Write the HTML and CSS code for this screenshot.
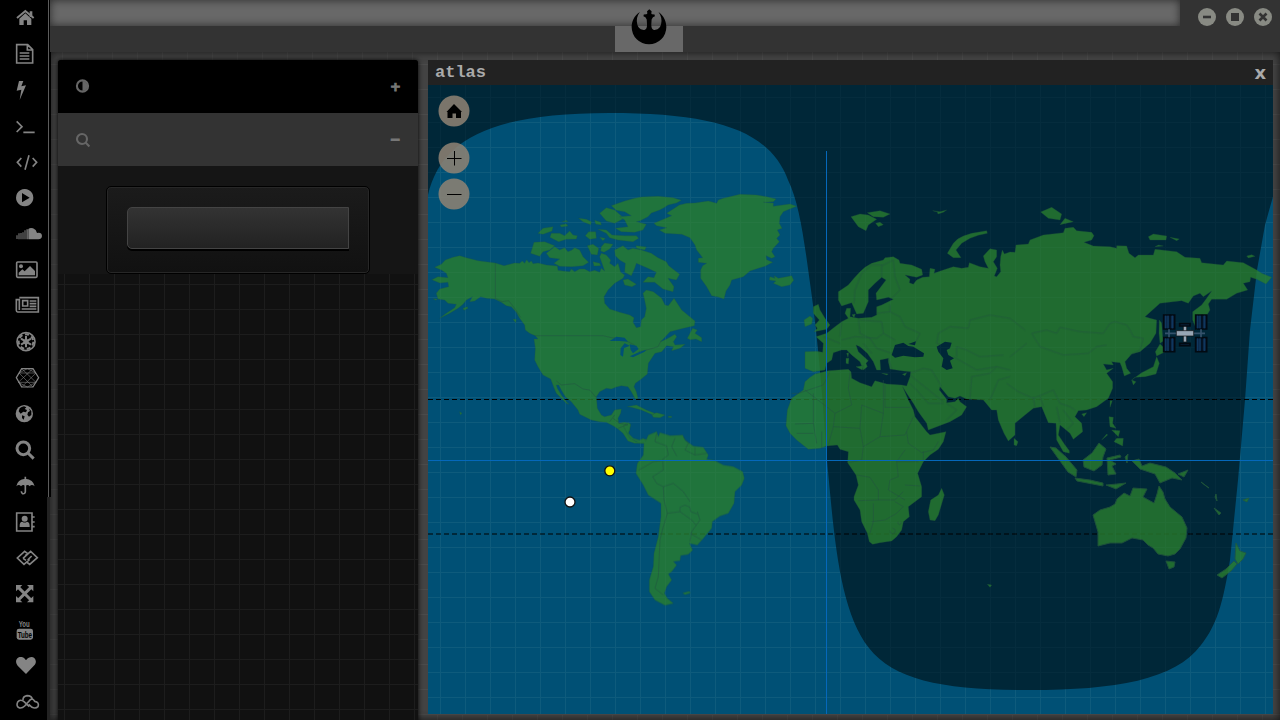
FILE: index.html
```html
<!DOCTYPE html>
<html lang="en">
<head>
<meta charset="utf-8">
<title>atlas</title>
<link rel="stylesheet" href="styles.css">
</head>
<body>
<div class="desktop">
<nav class="rail">
<svg viewBox="0 0 84 108"><path class="ln w5" d="M6 54L31 33 56 54"/><path d="M44 34h8v17h-8zM13 56L31 40 49 56V75H36V61H26V75H13z"/></svg>
<svg viewBox="0 0 84 108"><path class="ln w4" d="M5 26H38L53 41V81H5zM37 26V42H53M14 51H43M14 60H43M14 69H43"/></svg>
<svg viewBox="0 0 84 108"><path d="M12 27H25L19 43 33 40 14 84 19 53 5 56z"/></svg>
<svg viewBox="0 0 84 108"><path class="ln w4" d="M5 40L21 56 5 72M25 73H59"/></svg>
<svg viewBox="0 0 84 108"><path class="ln w4" d="M19 42L7 55 19 68M53 42L65 55 53 68M42 34L30 77"/></svg>
<svg viewBox="0 0 84 108"><path fill-rule="evenodd" d="M29 27a26 26 0 1 0 .1 0zM21 39L44 53 21 67z"/></svg>
<svg viewBox="0 0 84 108"><path d="M40 70V39Q46 34 54 37 64 41 66 51 80 48 81 60 80 70 70 70z"/><path opacity=".75" d="M4 58h4v11H4zM10 52h4v18h-4zM16 51h4v19h-4zM22 49h4v21h-4zM28 43h4v27h-4zM34 40h5v30h-5z"/></svg>
<svg viewBox="0 0 84 108"><rect class="ln w4" x="5" y="30" width="61" height="46" rx="3"/><circle cx="18" cy="43" r="6"/><path d="M11 70V62L22 52 29 58 45 42 60 57V70z"/></svg>
<svg viewBox="0 0 84 108"><path class="ln w4" d="M13 29H70V72H8Q4 72 4 67V35H13V66M23 38H38V54H23zM44 39H64M44 47H64M44 55H64M20 63H64"/></svg>
<svg viewBox="0 0 84 108"><circle class="ln w4" cx="33" cy="53" r="27"/><circle class="ln w5" stroke-dasharray="12 8" cx="33" cy="53" r="22"/><path class="ln w5" d="M33 36V70M18 44L48 62M18 62L48 44"/><circle cx="33" cy="53" r="8"/></svg>
<svg viewBox="0 0 84 108"><path class="ln w2" d="M10 67H64M12 39H63M20 26L63 67M54 26L10 67M12 39L54 81M63 39L20 81M37 26L12 39M37 26L63 39M37 81L63 67M37 81L10 67"/><path class="ln w3" d="M4 53L20 26H54L71 53 54 81H20z"/></svg>
<svg viewBox="0 0 84 108"><circle cx="28" cy="53" r="26"/><path class="cut" d="M27 31L34 34 29 39 36 42 33 49 25 47 17 53 11 46 14 37 20 33zM41 37L49 45 49 57 42 62 37 56 39 49 45 45zM21 58L29 61 26 71 21 66z"/></svg>
<svg viewBox="0 0 84 108"><circle class="ln w8" cx="25" cy="49" r="19"/><path class="ln w8" d="M39 63L56 80"/></svg>
<svg viewBox="0 0 84 108"><path d="M4 55Q7 34 31 32 55 34 59 55 50 47 44 55 39 48 31 54 24 48 18 55 12 47 4 55z"/><path class="ln w4" d="M31 26V71Q30 78 23 77 19 75 19 70"/></svg>
<svg viewBox="0 0 84 108"><path class="ln w4" d="M5 27H51V81H5zM52 39H59M52 54H59M52 68H59"/><circle cx="29" cy="44" r="9"/><path d="M14 69Q13 53 22 53 29 58 36 53 45 54 44 69z"/></svg>
<svg viewBox="0 0 84 108"><path class="ln w4" d="M38 41L29 34 7 54 27 73 44 58M24 55L47 34 67 53 44 73 35 66M24 55L33 61M50 48L38 60M38 41L31 47"/></svg>
<svg viewBox="0 0 84 108"><path class="ln w8" d="M10 34L48 72M48 34L10 72"/><path d="M3 27H22L3 46zM36 27H55V46zM3 60V79H22zM55 60V79H36z"/></svg>
<svg viewBox="0 0 84 108"><text class="you" x="11" y="46" textLength="33" lengthAdjust="spacingAndGlyphs">You</text><rect x="5" y="50" width="49" height="33" rx="7"/><text class="tube" x="8" y="77" textLength="43" lengthAdjust="spacingAndGlyphs">Tube</text></svg>
<svg viewBox="0 0 84 108"><path d="M33 78L8 53C-3 39 7 26 18 27 27 27 31 35 33 36 35 35 40 27 49 27 60 27 68 39 58 52z"/></svg>
<svg viewBox="0 0 84 108"><path class="ln w4" d="M43 68L27 53Q16 44 8 54 2 67 14 72 22 73 29 66L46 47Q54 42 59 52 74 55 69 68 62 75 51 70L41 61M24 49Q23 37 36 35 51 35 52 47"/></svg>
</nav>
<div class="main">
<header class="top">
<div class="address"></div>
<div class="winbtns">
<svg viewBox="0 0 18 18"><circle cx="9" cy="9" r="9"/><path d="M5 9H13"/></svg>
<svg viewBox="0 0 18 18"><circle cx="9" cy="9" r="9"/><path class="sq" d="M5 5H13V13H5z"/></svg>
<svg viewBox="0 0 18 18"><circle cx="9" cy="9" r="9"/><path d="M5.5 5.5L12.5 12.5M12.5 5.5L5.5 12.5"/></svg>
</div>
<div class="tab"><svg viewBox="122 27 110 110"><path d="M149 36C131 48 124 65 124 82A53 53 0 0 0 230 82C230 65 223 48 206 36 215 48 217 60 214 73 211 87 200 92 192 91 186 89 184 83 184 74L185 59 189 52 195 49 194 44 186 43 184 41 185 34 178 28 171 34 172 41 169 43 161 44 160 49 166 52 170 59 171 74C171 83 169 89 163 91 155 92 144 87 141 73 138 60 140 48 149 36z"/></svg></div>
</header>
<div class="work">
<aside class="side">
<div class="row dark"><svg viewBox="0 0 14 14"><circle class="ring" cx="6.5" cy="7" r="5.6"/><path d="M6.5 2A5 5 0 0 1 6.5 12z"/></svg><b>+</b></div>
<div class="row"><svg viewBox="0 0 14 14"><circle class="ring" cx="6" cy="6" r="5"/><path class="ring" d="M9.6 9.6L13.4 13.4"/></svg><b>−</b></div>
<div class="content"><div class="box"><div class="field"></div></div></div>
</aside>
<section class="atlas">
<div class="title"><span>atlas</span><b>x</b></div>
<div class="mapwrap">
<svg class="map" viewBox="428 85 845 629">
<defs><pattern id="grid" x="440" y="97" width="25" height="25" patternUnits="userSpaceOnUse"><path class="gridline" d="M.5 0V25M1 .5H25"/></pattern></defs>
<rect class="sea" x="428" y="85" width="846" height="629"/>
<rect class="gridday" x="428" y="85" width="846" height="629" fill="url(#grid)"/>
<path class="night" d="M428 85H1274V193L1265 225 1257 270 1250 330 1245 400 1238 480 1230 560C1223 603 1217 625 1201 645 1175 680 1115 690 1030 690 945 690 895 681 869 648 839 610 834 535 827 460 822 390 818 340 811 290 804 240 800 205 788 180 770 132 720 113 609 113 490 113 441 140 428 195z"/>
<path class="tropic" d="M428 399.5H1274M428 534H1274"/>
<g class="land">
<g transform="translate(428 185) scale(.33333)">
<path d="M20 247L40 238 52 225 75 217 95 212 115 218 150 227 202 234 228 242 260 234 275 235 283 228 290 235 296 224 303 233 310 228 315 236 330 234 355 240 388 243 390 256 405 258 425 260 430 252 440 260 455 252 470 252 485 260 500 256 515 262 520 250 530 258 522 235 515 215 520 205 535 210 548 225 545 235 560 245 570 235 578 262 590 270 585 280 560 295 540 315 528 335 530 355 545 372 575 382 605 390 618 398 615 412 625 428 638 425 640 405 650 395 655 370 650 345 645 325 655 315 676 320 701 340 711 360 721 362 738 340 761 375 801 408 799 422 766 430 726 440 698 470 716 462 741 448 746 455 736 470 741 480 771 478 756 490 731 497 736 485 716 482 701 500 681 505 661 535 658 567 640 582 622 595 618 605 625 620 630 640 622 642 610 620 600 605 580 602 565 606 550 612 535 610 515 620 505 635 508 670 520 690 530 695 550 690 560 675 580 672 578 685 570 700 572 715 590 712 607 716 605 735 600 745 610 760 625 770 640 768 650 762 660 765 655 775 620 775 600 768 585 745 570 732 555 722 535 712 515 710 490 705 455 688 450 675 430 650 412 635 400 615 392 600 385 600 388 610 400 630 415 650 423 658 415 655 400 640 385 625 378 608 368 582 345 570 330 545 320 525 322 490 318 462 330 462 322 452 305 445 292 435 290 420 275 400 265 382 250 365 235 362 220 352 200 342 175 340 158 335 140 348 125 350 133 335 115 345 105 358 90 370 65 385 35 400 55 385 80 368 85 358 60 355 50 345 30 342 25 325 35 312 62 305 60 292 35 294 12 284 30 275 60 278 55 265 40 255z"/>
<path d="M318 172L350 170 380 182 365 195 345 200 335 214 308 205zM380 185L395 195 410 188 420 200 432 195 440 188 455 195 465 215 482 232 465 242 430 245 395 244 378 235 395 222 365 218 355 205zM330 145L345 130 375 125 372 138 345 148zM370 145L395 145 410 152 425 138 435 150 448 152 445 162 415 163 392 170 366 157zM396 120L415 117 420 123 400 126zM402 110L415 106 420 110zM452 100L475 103 490 110 488 119 465 110zM500 106L518 112 520 120 503 117zM472 152L482 140 503 140 505 160 485 163zM478 182L495 178 512 190 508 210 490 208zM520 185L530 174 555 178 545 192 528 202 518 198zM515 157L532 160 525 167zM510 133L535 135 552 150 590 152 625 152 632 160 615 170 570 165 545 158 535 145zM515 85L535 68 560 75 588 100 560 115 535 108z"/>
<path d="M550 62L590 48 620 40 640 36 690 34 735 38 760 46 745 54 720 60 708 68 695 75 670 84 660 95 635 108 625 110 655 118 645 135 620 142 580 140 562 130 600 125 590 105 575 95 610 92 590 80 565 76zM560 195L585 182 600 195 615 190 640 195 670 205 690 218 715 230 722 242 755 268 745 285 720 280 738 305 735 320 705 312 680 292 645 292 660 275 678 278 685 262 660 250 625 235 620 250 610 272 590 262 592 235 575 225 562 212zM585 285L600 282 625 298 612 305 590 300zM624 182L655 186 650 195 626 190zM495 230L515 235 518 242 498 243zM778 460L794 430 808 435 801 445 821 458 821 470 804 462 786 464zM598 665L625 660 655 675 680 685 675 690 640 675 610 667zM671 688L686 683 711 690 696 698 676 697zM721 694L731 694 730 698 721 697zM95 680L102 685 97 690zM255 403L265 403 263 413zM105 370L118 365 120 370 108 376zM15 341L28 342 24 346z"/>
</g>
<g transform="translate(640 185) scale(.33333)">
<path d="M42 115L95 92 80 85 118 60 140 55 165 54 205 48 230 55 235 45 250 40 300 28 350 30 380 35 408 42 400 50 370 52 400 54 400 64 450 57 470 64 440 76 430 80 420 95 418 115 426 130 412 135 420 150 410 160 418 170 400 190 395 200 405 215 395 220 378 212 380 224 398 232 375 244 360 248 330 258 310 275 275 285 270 300 258 318 252 342 235 336 215 332 200 305 182 280 182 255 188 242 200 235 175 232 175 220 188 218 180 208 170 195 165 180 150 158 125 148 75 145 58 135 80 128 50 122zM390 275L405 280 402 272 415 280 440 275 455 272 461 286 450 300 425 305 400 295 408 288 388 285z"/>
</g>
<g transform="translate(560 420) scale(.33333)">
<path d="M190 18L205 8 212 15 205 40 220 55 238 60 250 55 258 62 265 45 290 35 295 50 300 38 330 47 368 45 375 60 400 78 430 82 445 105 440 118 465 122 490 135 520 140 548 155 553 175 545 195 525 215 522 250 505 280 480 288 457 305 455 325 430 355 412 375 388 370 398 390 385 403 362 407 360 422 340 425 350 435 335 455 325 462 335 480 320 500 313 520 322 535 340 550 315 556 285 540 268 515 268 480 280 440 282 400 295 350 303 290 303 250 265 225 250 195 228 160 232 130 250 105 252 70 235 68 210 55zM368 519L388 514 391 519 375 524z"/>
</g>
<g transform="translate(780 190) scale(.33333)">
<path d="M175 305L205 285 222 265 240 245 255 232 275 220 310 210 315 203 340 200 357 210 360 220 395 225 425 238 428 255 410 262 375 255 390 268 388 278 400 283 410 270 428 262 448 260 450 235 465 238 462 250 490 240 520 230 545 235 565 232 568 218 600 230 625 235 615 215 610 198 630 176 650 180 650 200 640 215 652 235 643 258 650 260 662 245 660 225 662 200 667 180 673 192 690 186 705 187 708 165 745 162 750 150 790 135 850 128 855 115 880 112 890 122 935 127 942 137 935 150 912 157 940 168 990 170 1010 175 1010 167 1040 168 1047 190 1065 203 1075 195 1120 195 1125 178 1190 185 1215 202 1260 205 1265 218 1330 225 1340 213 1390 218 1430 240 1445 250 1475 262 1458 282 1430 268 1412 262 1410 275 1390 280 1403 300 1370 310 1340 328 1295 328 1285 342 1290 360 1275 385 1260 400 1250 420 1238 390 1238 365 1265 345 1280 325 1295 303 1270 320 1260 310 1240 318 1225 340 1205 332 1140 340 1095 380 1110 385 1130 390 1128 430 1110 460 1080 485 1055 492 1035 515 1040 535 1052 550 1033 558 1025 530 1020 518 995 515 1000 525 970 522 980 540 1000 535 980 550 998 575 998 595 985 625 950 650 920 660 895 662 885 680 905 700 908 725 880 748 870 730 852 715 840 705 835 735 855 765 868 782 868 790 850 785 830 750 828 700 805 698 785 650 760 655 735 675 705 700 705 735 685 753 672 730 655 690 650 660 635 660 610 630 560 627 540 618 525 625 505 620 480 590 478 600 500 628 500 638 525 635 535 625 540 635 560 650 545 675 510 695 445 720 440 700 415 665 400 640 380 610 368 590 385 630 400 660 405 680 440 725 450 735 498 725 490 755 475 778 450 795 430 815 413 850 425 890 425 920 385 950 388 980 370 995 365 1020 350 1040 335 1053 300 1058 278 1063 268 1055 262 1030 245 995 240 960 222 930 222 920 235 885 228 855 203 818 205 785 180 778 172 765 140 768 120 775 85 778 50 750 30 730 18 707 22 660 35 625 70 600 75 575 90 562 105 552 145 542 205 538 213 545 215 565 240 578 275 590 285 572 320 582 365 585 380 588 390 560 392 545 370 543 330 537 325 515 325 505 300 510 302 540 290 540 280 515 262 490 240 470 228 465 235 485 265 512 258 520 262 530 250 540 240 515 215 495 200 480 185 480 160 488 155 510 140 520 135 540 100 545 75 535 75 485 110 484 128 487 130 460 108 440 140 430 165 410 185 395 205 385 195 370 200 355 212 355 210 380 235 385 275 382 290 375 290 350 305 345 340 328 325 322 290 330 288 310 318 270 305 262 285 280 265 300 265 335 250 370 230 372 215 338 185 348 175 330z"/>
<path d="M100 350L115 343 120 360 135 385 150 405 140 418 102 425 112 415 105 405 118 390 100 370zM72 390L90 378 98 385 95 402 75 410zM213 80L240 72 265 75 290 88 265 105 258 122 235 110zM262 68L300 62 330 72 310 82 280 80zM287 100L300 97 310 104 295 110zM502 190L520 160 533 147 550 138 575 130 620 122 622 130 595 136 570 145 545 160 528 180 543 203 520 203zM458 62L480 65 500 60 490 67 474 72 472 66zM702 745L714 755 710 767 702 765zM485 895L493 915 475 975 465 992 450 990 445 965 452 930 475 915zM228 530L250 527 247 540zM198 505L207 505 205 522 198 520zM200 490L206 488 204 502zM305 550L325 552 320 555zM367 553L380 548 375 557zM622 1183L635 1185 630 1192zM216 374L226 372 222 383z"/>
<path transform="translate(690 0)" d="M92 66L125 52 155 72 150 90 115 85zM150 104L165 85 190 95zM415 140L430 132 470 138 468 150 420 150zM480 142L508 147 500 152zM435 170L460 168 445 165zM710 198L725 194 735 199 715 204zM448 390L455 400 458 440 465 450 450 460 447 430zM450 462L472 482 440 498 436 485zM440 500L448 520 438 552 405 560 375 562 365 570 395 548 430 530zM365 570L378 575 370 585zM300 632L307 632 300 652zM215 672L230 668 222 680zM297 680L310 682 308 700 318 715 300 710zM320 745L340 745 338 768 312 755zM305 720L330 722 325 740zM275 750L290 732 293 735z"/>
</g>
<path d="M1050 447L1056 448 1066 457 1077 470 1076 477 1068 472 1060 461zM1075 478L1090 480 1103 483 1103 486 1077 481zM1106 485L1117 484 1126 483 1116 489zM1083 460L1092 453 1099 443 1106 449 1103 457 1102 465 1094 471 1084 467zM1107 458L1120 455 1121 457 1110 460 1116 464 1112 466 1116 474 1108 475zM1132 461L1139 459 1142 466 1150 463 1166 467 1175 473 1182 480 1172 478 1160 483 1155 474 1140 469zM1178 474L1188 470 1184 477zM1125 457L1128 454 1127 463z"/>
<path d="M1093 515L1100 510 1110 507 1115 504 1117 499 1124 493 1130 496 1133 488 1147 489 1143 497 1154 503 1157 494 1159 486 1163 492 1165 499 1170 507 1182 517 1187 528 1186 538 1180 549 1175 554 1168 556 1158 554 1153 548 1148 545 1143 540 1132 538 1122 543 1110 543 1098 546 1098 532zM1166 561L1175 562 1174 567 1169 569zM1236 543L1240 551 1246 553 1243 559 1238 564 1235 559zM1234 561L1237 564 1231 571 1222 578 1217 575 1226 569zM1214 508L1221 513 1219 515zM1243 500L1249 498 1247 502zM1201 482L1209 488 1206 486zM1216 494L1217 501 1215 497z"/>
</g>
<g class="borders">
<path transform="translate(428 185) scale(.33333)" d="M202 234V340L222 350 242 347 260 370 278 397M320 452H525L550 458 580 460 620 480M632 500L660 494 690 485 700 466M385 588L400 600 440 596 465 612 485 615 505 638M545 710L560 690M555 700L575 715 600 720M570 730L600 718"/>
<path transform="translate(560 420) scale(.33333)" d="M290 40L285 65 320 78 325 105 308 118 310 150 278 170 290 190 310 200 340 190 370 215 390 245M412 275L420 300 395 335 390 365M370 50L385 70 375 90 405 105 440 100M405 82V105M236 150L255 140 280 125 305 122M310 200L312 240 322 280 310 320 300 360 295 470 285 505 310 525M322 280L360 275 360 262 375 255 390 262 392 275 412 282M360 275L395 300 408 315M390 340L425 360M345 55L335 80 350 108"/>
<path transform="translate(780 190) scale(.33333)" d="M222 340L225 300 245 250 275 225 310 225 340 210 345 260 360 300 335 325M305 225L305 262M330 345L330 365 360 380 375 410 420 430 405 460M290 370L330 365M240 390L305 395 310 430 290 445 225 440 185 450M185 395L180 440M130 440L180 460M235 385L240 430 270 445 290 475 335 490M250 460L275 490M310 430L345 450M335 537L325 505M470 460L475 430 510 410 565 415 570 390 630 375 690 385 735 420M470 460L500 470M755 430L800 420 830 430 840 412 900 425 970 430 990 400 1005 395 1040 405 1050 420 1060 440 1090 445 1080 480 1050 495M755 430L780 470 850 495 925 490 950 470 980 465M530 500V470L560 480 600 500 670 495M690 500L740 460M520 500L590 540 650 530 690 540M570 625L575 560 630 550 650 530M630 630L655 570 690 560M680 580L715 605 760 625 820 600M760 620L765 655M780 620L790 650M820 600L840 640 870 650 885 660M830 650L840 700M850 660L880 700 860 720M390 550L430 535 455 540 485 590M390 555L440 595 490 635M390 580L410 600 445 640 490 640M500 640L530 660 500 690"/>
<path transform="translate(780 360) scale(.33333)" d="M150 35L130 75 55 100H35M75 90L165 160 215 135 205 85 210 35M100 100V190L45 192M165 160L160 200 240 205 245 135 310 160V60M315 75V142H390M310 160L300 230 250 260 240 205M300 230L375 225 400 170M380 215L385 250 425 278 460 270 475 245M375 270L350 305 355 350 330 360 325 390 375 420M230 345L270 352 295 390V420L235 422M295 420H345L370 395M280 430V485L270 520M345 425L370 440 350 460 315 480 275 485M205 308L245 300 250 260M350 305H415M430 275V305M100 190L110 250M125 215V265M160 200L145 255M50 220H100M375 375L420 378M330 512A8 8 0 1 0 338 505M355 485A5 5 0 1 0 362 485"/>
</g>
<g class="daylake" transform="translate(428 185) scale(.33333)"><path d="M545 468L565 455 590 458 600 470 575 468zM578 490L590 475 605 482 588 490 585 515 577 510zM605 478L625 482 632 492 615 505 608 495zM605 514L632 502 655 494 650 500 615 517z"/></g>
<g class="nightlake" transform="translate(780 190) scale(.33333)"><path d="M335 495L345 465 370 458 385 468 400 470 432 490 430 500 405 502 370 497 345 503zM385 462L408 454 405 466zM470 470L495 455 515 458 510 475 500 480 505 495 522 505 510 512 518 535 500 540 485 530 490 505 475 485z"/></g>
<rect class="gridall" x="428" y="85" width="846" height="629" fill="url(#grid)"/>
<path class="axis" d="M826.5 151V714M428 460.5H1274"/>
<g transform="translate(1010 190) scale(.33333)" class="iss"><path class="panel" d="M461 375h33v42h-33zM461 443h33v42h-33zM557 375h33v42h-33zM557 443h33v42h-33z"/><path class="cells" d="M467 377v38M474 377v38M487 377v38M467 445v38M474 445v38M487 445v38M563 377v38M570 377v38M583 377v38M563 445v38M570 445v38M583 445v38"/><path class="split" d="M480 374V418M480 442V486M576 374V418M576 442V486"/><path class="truss" d="M477 418V442M573 418V442M465 430H585"/><path class="white" d="M520 406h10v50h-10z"/><path class="panel" d="M509 401h31v7h-31zM509 460h31v7h-31z"/><path class="white" d="M499 422h52v16h-52z"/></g>
<circle class="dot moon" cx="570" cy="502" r="5"/><circle class="dot sun" cx="609.8" cy="470.8" r="5"/>
</svg>
<div class="zoomers">
<svg viewBox="0 0 32 32"><circle cx="16" cy="16" r="15.5"/><path class="solid" d="M8.5 17L16 9 24 17H23V23H18V18.5H14.5V23H9.5V17z"/></svg>
<svg viewBox="0 0 32 32"><circle cx="16" cy="16" r="15.5"/><path d="M9 16.5H23.5M16.5 9V23.5"/></svg>
<svg viewBox="0 0 32 32"><circle cx="16" cy="16" r="15.5"/><path d="M9 16.5H23.5"/></svg>
</div>
</div>
</section>
</div>
</div>
</div>
</body>
</html>
```
FILE: styles.css
```css
* { box-sizing: border-box; }
body { margin: 0; overflow: hidden; background: #222; }
.desktop { display: flex; width: 1280px; height: 720px; }
.rail {
  position: relative;
  width: 50px;
  height: 720px;
  padding-left: 15px;
  display: flex;
  flex-direction: column;
  background: linear-gradient(90deg, #000 47px, #222 47px);
}
.rail::after {
  content: "";
  position: absolute;
  left: 47px;
  top: 0;
  width: 3px;
  height: 497px;
  background: #000;
  border-left: 1px solid #000;
  box-shadow: inset 1px 0 #5c5c5c;
}
.rail svg { width: 28px; height: 36px; flex: none; fill: #848484; }
.rail .ln { fill: none; stroke: #848484; }
.w2 { stroke-width: 1.7; }
.w3 { stroke-width: 3.6; }
.w4 { stroke-width: 4.9; }
.w5 { stroke-width: 6; }
.w8 { stroke-width: 9; }
.rail .cut { fill: #000; }
.you { font: bold 29px "Liberation Sans", sans-serif; }
.tube { font: bold 28px "Liberation Sans", sans-serif; fill: #000; }
.main { flex: 1; min-width: 0; display: flex; flex-direction: column; }
.top {
  position: relative;
  height: 52px;
  flex: none;
  display: flex;
  justify-content: space-between;
  background: #333;
}
.address {
  width: 1130px;
  height: 26px;
  background: #686868;
  box-shadow: inset 0 0 8px #2a2a2a;
}
.winbtns { display: flex; gap: 10px; padding: 8px 8px 0 0; }
.winbtns svg { width: 18px; height: 18px; fill: #888a83; }
.winbtns path { stroke: #333; stroke-width: 2.6; fill: none; }
.winbtns .sq { fill: #333; stroke-width: 0; }
.tab {
  position: absolute;
  left: 565px;
  top: 26px;
  width: 68px;
  height: 26px;
  background: #686868;
}
.tab svg { position: absolute; left: 16px; top: -17px; width: 36px; height: 36px; }
.work {
  flex: 1;
  min-height: 0;
  display: flex;
  gap: 10px;
  padding: 8px 7px 6px 8px;
  background:
    linear-gradient(90deg, #4b4b4b 1px, transparent 1px) 12px 0 / 25px 25px,
    linear-gradient(#4b4b4b 1px, transparent 1px) 0 12px / 25px 25px,
    #434343;
  box-shadow: inset 0 0 8px #151515;
}
.side {
  width: 360px;
  height: 670px;
  display: flex;
  flex-direction: column;
  border-radius: 3px 3px 0 0;
  overflow: hidden;
  background:
    linear-gradient(90deg, #1d1d1d 1px, transparent 1px) 6px 0 / 25px 25px,
    linear-gradient(#1d1d1d 1px, transparent 1px) 0 -1px / 25px 25px,
    #111;
  box-shadow: 0 0 5px #000;
}
.row {
  height: 53px;
  flex: none;
  display: flex;
  align-items: center;
  justify-content: space-between;
  padding: 0 17px 0 18px;
  background: #333;
  color: #777;
  font: bold 13px "DejaVu Sans", sans-serif;
}
.row b { -webkit-text-stroke: .9px #777; }
.row.dark { padding-bottom: 1px; background: #000; }
.row svg { width: 14px; height: 14px; fill: #666; overflow: visible; }
.row .ring { fill: none; stroke: #666; stroke-width: 2.1; }
.content { height: 108px; padding: 20px 48px 0; background: #151515; }
.box {
  height: 88px;
  padding: 20px;
  border: 1px solid #000;
  border-radius: 5px;
  background: linear-gradient(#1b1b1b, #111);
  box-shadow: inset 0 0 0 1px #272727;
}
.field {
  height: 42px;
  border: 1px solid #444;
  border-radius: 5px 0 0 5px;
  background: linear-gradient(#333, #222);
  box-shadow: 0 2px #000;
}
.atlas { flex: 1; min-width: 0; display: flex; flex-direction: column; }
.title {
  height: 25px;
  padding: 0 7px;
  display: flex;
  justify-content: space-between;
  align-items: center;
  background: #222;
  color: #aaa;
  font: bold 17px/25px "Liberation Mono", monospace;
}
.title b { font: bold 18px/24px "DejaVu Sans", sans-serif; }
.mapwrap { position: relative; height: 629px; }
.map { display: block; width: 845px; height: 629px; }
.gridline { stroke: #9cb; fill: none; }
.gridday { opacity: .065; }
.gridall { opacity: .035; }
.sea, .daylake { fill: #005075; }
.night, .nightlake { fill: #002738; }
.land { fill: #287d2f; stroke: #245c3a; stroke-width: 1; stroke-linejoin: round; opacity: .8; }
.borders { fill: none; stroke: #245044; stroke-opacity: .55; stroke-width: 2.5; stroke-linejoin: round; }
.tropic { fill: none; stroke: #000; stroke-width: 1.2; stroke-dasharray: 5 3; }
.axis { fill: none; stroke: #0568bb; }
.dot { stroke: #111; stroke-width: 1.3; }
.moon { fill: #fff; }
.sun { fill: #ff0; }
.panel { fill: #0b2745; stroke: #020a12; stroke-width: 5; }
.cells { stroke: #123c64; stroke-width: 3; }
.split { stroke: #020a12; stroke-width: 4; }
.truss { stroke: #34526b; stroke-width: 5; fill: none; }
.white { fill: #98a6b4; stroke: #111; stroke-width: 2; }
.zoomers {
  position: absolute;
  left: 10px;
  top: 10px;
  display: flex;
  flex-direction: column;
}
.zoomers svg { width: 32px; height: 32px; margin-bottom: 4px; }
.zoomers svg:first-child { margin-bottom: 15px; }
.zoomers circle { fill: rgba(143, 130, 115, .86); }
.zoomers path { stroke: #000; fill: none; }
.zoomers .solid { fill: #000; stroke: none; }
```
